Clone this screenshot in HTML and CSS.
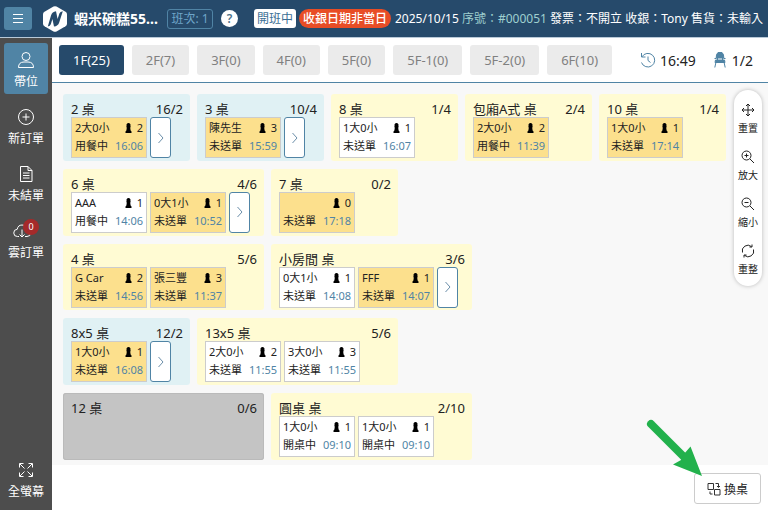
FILE: index.html
```html
<!DOCTYPE html>
<html lang="zh-Hant">
<head>
<meta charset="utf-8">
<title>帶位</title>
<link rel="stylesheet" href="styles.css">
</head>
<body>
<svg class="defs" aria-hidden="true">
  <symbol id="pawn" viewBox="0 0 7 10"><path d="M3.500 0a2 2 0 0 1 1.800 2.900L5.800 4 5.200 4.500 5.600 7.500 6.500 8.500V10H.5V8.500L1.400 7.500 1.800 4.500 1.200 4 1.700 2.900A2 2 0 0 1 3.500 0z"/></symbol>
  <symbol id="next" viewBox="0 0 8 14"><path d="M1.500 2l4.500 5-4.500 5"/></symbol>
</svg>
<header class="topbar">
  <button class="menu" aria-label="選單"><svg width="12" height="12" viewBox="0 0 12 12"><path d="M1 1.500h10M1 5.500h10M1 9.500h10"/></svg></button>
  <svg class="logo" viewBox="0 0 24 26"><path fill="#fff" d="M10.500.6q1.500-.8 3 0l9 5.100q1.500.9 1.500 2.500v9.600q0 1.600-1.500 2.500l-9 5.100q-1.500.8-3 0l-9-5.100Q0 19.400 0 17.800V8.200q0-1.600 1.500-2.500z"/><path fill="#264a6b" d="M4.800 20.500L8 9.500Q9.200 5.500 13 5.200L14.600 13 16.400 7.500Q17 5.500 19.800 5.200L16.200 16.500Q15 20.200 11 20.600L9.400 13 7.800 18.300Q7.200 20.300 4.800 20.500z"/></svg>
  <h1>蝦米碗糕55...</h1>
  <span class="shift">班次: 1</span>
  <button class="help" aria-label="說明">?</button>
  <span class="open">開班中</span>
  <span class="warn">收銀日期非當日</span>
  <p class="info">2025/10/15 <span>序號：#000051</span> 發票：不開立 收銀：Tony 售貨：未輸入</p>
</header>
<div class="body">
  <nav class="side">
    <a href="#" class="on"><svg width="18" height="18" viewBox="0 0 18 18"><circle cx="9" cy="5.500" r="4"/><path d="M1.500 16.500q0-5.500 5.500-5.500h4q5.500 0 5.500 5.500z"/></svg>帶位</a>
    <a href="#"><svg width="18" height="18" viewBox="0 0 18 18"><circle cx="9" cy="9" r="7.500"/><path d="M9 5.500v7M5.500 9h7"/></svg>新訂單</a>
    <a href="#"><svg width="18" height="18" viewBox="0 0 18 18"><path d="M3.500 1.500h7.500l4 4v11H3.500zM11 1.500v4h4M6 8h6.500M6 10.500h6.500M6 13h6.500"/></svg>未結單</a>
    <a href="#" class="cloud"><svg width="18" height="18" viewBox="0 0 18 18"><path d="M6 14.500H4.500a3.600 3.600 0 0 1-.3-7.200Q5 3 9 3t5 4.300a3.600 3.600 0 0 1 0 7.200H12M9 7.500V15M6.500 12.500L9 15l2.500-2.500"/></svg><b>0</b>雲訂單</a>
    <a href="#" class="full"><svg width="18" height="18" viewBox="0 0 18 18"><path d="M7.500 7.500L3 3M2.500 6.500v-4h4M10.500 7.500L15 3M11.500 2.500h4v4M7.500 10.500L3 15M2.500 11.500v4h4M10.500 10.500L15 15M11.500 15.500h4v-4"/></svg>全螢幕</a>
  </nav>
  <main>
    <div class="tabs">
      <button class="on">1F(25)</button><button>2F(7)</button><button>3F(0)</button><button>4F(0)</button><button>5F(0)</button><button>5F-1(0)</button><button>5F-2(0)</button><button>6F(10)</button>
      <div class="stat clock"><svg width="16" height="16" viewBox="0 0 16 16"><path d="M2 4.800A6.800 6.800 0 1 1 1.500 10.500M1.500 1v4h4M8 4.500V8.500l2.500 2"/></svg>16:49</div>
      <div class="stat seat"><svg width="12" height="16" viewBox="0 0 12 16"><path class="fill" d="M4 .5h4Q10 2 9.800 6H2.200Q2 2 4 .5zM1.500 8h9l.5 2.500H1z"/><path d="M2 10L.8 15.500M10 10l1.200 5.500M.5 6.500h2M9.500 6.500h2M3.500 6v2M8.500 6v2"/></svg>1/2</div>
    </div>
    <div class="floor">
      <div class="rows">
        <div class="row">
          <section class="card blue"><h2>2 桌 <span>16/2</span></h2><div class="list">
            <button class="t gold"><span>2大0小</span><i><svg><use href="#pawn"/></svg>2</i><span>用餐中</span><em>16:06</em></button>
            <button class="more" aria-label="更多"><svg><use href="#next"/></svg></button></div></section>
          <section class="card blue"><h2>3 桌 <span>10/4</span></h2><div class="list">
            <button class="t gold"><span>陳先生</span><i><svg><use href="#pawn"/></svg>3</i><span>未送單</span><em>15:59</em></button>
            <button class="more" aria-label="更多"><svg><use href="#next"/></svg></button></div></section>
          <section class="card"><h2>8 桌 <span>1/4</span></h2><div class="list">
            <button class="t"><span>1大0小</span><i><svg><use href="#pawn"/></svg>1</i><span>未送單</span><em>16:07</em></button></div></section>
          <section class="card"><h2>包廂A式 桌 <span>2/4</span></h2><div class="list">
            <button class="t gold"><span>2大0小</span><i><svg><use href="#pawn"/></svg>2</i><span>用餐中</span><em>11:39</em></button></div></section>
          <section class="card"><h2>10 桌 <span>1/4</span></h2><div class="list">
            <button class="t gold"><span>1大0小</span><i><svg><use href="#pawn"/></svg>1</i><span>未送單</span><em>17:14</em></button></div></section>
        </div>
        <div class="row">
          <section class="card wide"><h2>6 桌 <span>4/6</span></h2><div class="list">
            <button class="t"><span>AAA</span><i><svg><use href="#pawn"/></svg>1</i><span>用餐中</span><em>14:06</em></button>
            <button class="t gold"><span>0大1小</span><i><svg><use href="#pawn"/></svg>1</i><span>未送單</span><em>10:52</em></button>
            <button class="more" aria-label="更多"><svg><use href="#next"/></svg></button></div></section>
          <section class="card"><h2>7 桌 <span>0/2</span></h2><div class="list">
            <button class="t gold"><span></span><i><svg><use href="#pawn"/></svg>0</i><span>未送單</span><em>17:18</em></button></div></section>
        </div>
        <div class="row">
          <section class="card wide"><h2>4 桌 <span>5/6</span></h2><div class="list">
            <button class="t gold"><span>G Car</span><i><svg><use href="#pawn"/></svg>2</i><span>未送單</span><em>14:56</em></button>
            <button class="t gold"><span>張三豐</span><i><svg><use href="#pawn"/></svg>3</i><span>未送單</span><em>11:37</em></button></div></section>
          <section class="card wide"><h2>小房間 桌 <span>3/6</span></h2><div class="list">
            <button class="t"><span>0大1小</span><i><svg><use href="#pawn"/></svg>1</i><span>未送單</span><em>14:08</em></button>
            <button class="t gold"><span>FFF</span><i><svg><use href="#pawn"/></svg>1</i><span>未送單</span><em>14:07</em></button>
            <button class="more" aria-label="更多"><svg><use href="#next"/></svg></button></div></section>
        </div>
        <div class="row">
          <section class="card blue"><h2>8x5 桌 <span>12/2</span></h2><div class="list">
            <button class="t gold"><span>1大0小</span><i><svg><use href="#pawn"/></svg>1</i><span>未送單</span><em>16:08</em></button>
            <button class="more" aria-label="更多"><svg><use href="#next"/></svg></button></div></section>
          <section class="card wide"><h2>13x5 桌 <span>5/6</span></h2><div class="list">
            <button class="t"><span>2大0小</span><i><svg><use href="#pawn"/></svg>2</i><span>未送單</span><em>11:55</em></button>
            <button class="t"><span>3大0小</span><i><svg><use href="#pawn"/></svg>3</i><span>未送單</span><em>11:55</em></button></div></section>
        </div>
        <div class="row">
          <section class="card wide gray"><h2>12 桌 <span>0/6</span></h2></section>
          <section class="card wide"><h2>圓桌 桌 <span>2/10</span></h2><div class="list">
            <button class="t"><span>1大0小</span><i><svg><use href="#pawn"/></svg>1</i><span>開桌中</span><em>09:10</em></button>
            <button class="t"><span>1大0小</span><i><svg><use href="#pawn"/></svg>1</i><span>開桌中</span><em>09:10</em></button></div></section>
        </div>
      </div>
      <div class="tools">
        <button><svg viewBox="0 0 14 14"><path d="M7 1v12M1 7h12M5 3l2-2 2 2M5 11l2 2 2-2M3 5L1 7l2 2M11 5l2 2-2 2"/></svg>重置</button>
        <button><svg viewBox="0 0 14 14"><circle cx="5.500" cy="5.500" r="4.500"/><path d="M9 9l4 4M3.500 5.500h4M5.500 3.500v4"/></svg>放大</button>
        <button><svg viewBox="0 0 14 14"><circle cx="5.500" cy="5.500" r="4.500"/><path d="M9 9l4 4M3.500 5.500h4"/></svg>縮小</button>
        <button><svg viewBox="0 0 14 14"><path d="M1.500 8.500A5.600 5.600 0 0 1 10.500 2.600M12.500 5.500A5.600 5.600 0 0 1 3.500 11.400M11 .5v2.500H8.500M3 13.500V11h2.500"/></svg>重整</button>
      </div>
    </div>
    <footer>
      <button class="swap"><svg width="14" height="14" viewBox="0 0 14 14"><path d="M1 1.500h5.500v6H1zM7.500 7.500h5.500v5.500H7.500zM8.500 1.500h3v3.500M10 4l1.500 1.500L13 4M3 9.500v2.500h2.500"/></svg>換桌</button>
      <svg class="arrow" viewBox="0 0 58 58"><path d="M5 5L39 39" stroke="#22b14c" stroke-width="8" stroke-linecap="round"/><path d="M56 57L44.500 27.500 38 35 35 41 27 45.500z" fill="#22b14c"/></svg>
    </footer>
  </main>
</div>
</body>
</html>
```
FILE: styles.css
```css
* { box-sizing: border-box; }
body {
  margin: 0;
  height: 100vh;
  display: flex;
  flex-direction: column;
  font-family: "Noto Sans", "Noto Sans CJK TC", sans-serif;
  color: #222;
  background: #fff;
}
button { font: inherit; color: inherit; border: 0; padding: 0; margin: 0; background: none; }
h1, h2, p { margin: 0; }
svg { display: block; fill: none; stroke-width: 1; flex: none; }
.defs { position: absolute; width: 0; height: 0; }

.topbar {
  flex: none;
  height: 38px;
  display: flex;
  align-items: center;
  padding-left: 4px;
  background: #264a6b;
  border-bottom: 1px solid #b9c9d8;
  color: #fff;
  white-space: nowrap;
  overflow: hidden;
}
.menu {
  width: 28px;
  height: 23px;
  display: grid;
  place-items: center;
  border-radius: 3px;
  background: #5084a5;
}
.menu svg { stroke: #fff; }
.logo { width: 24px; height: 26px; margin: 0 7px 0 11px; }
h1 { width: 86px; font-size: 14px; line-height: 20px; font-weight: 700; }
.shift {
  margin-left: 7px;
  width: 46px;
  text-align: center;
  border: 1px solid #5084a5;
  border-radius: 3px;
  font-size: 12px;
  line-height: 18px;
  color: #6fa5c9;
}
.help {
  width: 17px;
  height: 17px;
  margin: 0 16px 0 8px;
  border-radius: 50%;
  background: #fff;
  color: #4d7288;
  font-size: 12px;
  line-height: 17px;
  font-weight: 600;
}
.open {
  width: 42px;
  text-align: center;
  border-radius: 3px;
  background: #fff;
  color: #3b6f95;
  font-size: 12px;
  line-height: 19px;
}
.warn {
  margin: 0 4px 0 3px;
  width: 92px;
  text-align: center;
  border-radius: 10px;
  background: #e84d26;
  font-size: 12px;
  line-height: 19px;
  font-weight: 500;
}
.info { font-size: 12px; line-height: 20px; }
.info span { color: #9fd0cf; }

.body { flex: 1; min-height: 0; display: flex; }
.side {
  flex: none;
  width: 52px;
  display: flex;
  flex-direction: column;
  gap: 6px;
  padding: 5px 4px 6px;
  background: #4d4d4d;
}
.side a {
  height: 51px;
  display: flex;
  flex-direction: column;
  align-items: center;
  gap: 4px;
  padding-top: 8px;
  border-radius: 3px;
  font-size: 12px;
  line-height: 18px;
  color: #fff;
  text-decoration: none;
  white-space: nowrap;
}
.side svg { stroke: #fff; }
.side .on { background: #5084a5; }
.cloud { position: relative; }
.side .cloud svg { margin-right: 8px; }
.cloud b {
  position: absolute;
  top: 5px;
  left: 19px;
  width: 16px;
  height: 16px;
  border-radius: 50%;
  background: #a52a2a;
  font-size: 9px;
  line-height: 16px;
  font-weight: 400;
  text-align: center;
}
.side .full { margin-top: auto; }

main { flex: 1; min-width: 0; display: flex; flex-direction: column; }
.tabs {
  flex: none;
  height: 45px;
  display: flex;
  align-items: center;
  gap: 8px;
  padding: 0 15px 0 7px;
  border-bottom: 1px solid #5084a5;
  font-size: 13px;
}
.tabs button {
  height: 30px;
  padding: 0 10px;
  flex: 1 1 auto;
  border-radius: 3px;
  background: #ebebeb;
  color: #808080;
  white-space: nowrap;
}
.tabs .on { background: #264a6b; color: #fff; }
.stat { display: flex; align-items: center; gap: 4px; font-size: 14px; }
.clock { margin-left: 20px; }
.seat { margin-left: 10px; gap: 6px; }
.stat svg { stroke: #5084a5; }
.stat .fill { fill: #5084a5; }

.floor {
  flex: 1;
  min-height: 0;
  display: flex;
  align-items: flex-start;
  gap: 8px;
  padding: 7px 7px 5px 11px;
  background: #f8f8f8;
}
.rows {
  flex: 1;
  align-self: stretch;
  display: grid;
  grid-template-rows: repeat(5, 1fr);
  gap: 8px;
  padding-top: 4px;
}
.row { display: flex; gap: 7px; min-height: 0; }
.card {
  flex: none;
  width: 127px;
  padding: 7px 7px 0 8px;
  border-radius: 3px;
  background: #fffbd3;
}
.wide { width: 201px; }
.blue { background: #e0f1f4; }
.gray { background: #c4c4c4; box-shadow: inset 0 0 0 1px #bababa; }
h2 {
  display: flex;
  justify-content: space-between;
  font-size: 13px;
  line-height: 16px;
  font-weight: 400;
  white-space: nowrap;
}
.list { display: flex; gap: 3px; }
.t {
  flex: none;
  width: 76px;
  height: 41px;
  display: grid;
  grid-template-columns: auto auto;
  grid-template-rows: 18px 18px;
  justify-content: space-between;
  align-items: center;
  padding: 1px 3px;
  border: 1px solid #ccc;
  background: #fff;
  font-size: 11px;
  line-height: 18px;
  text-align: left;
  white-space: nowrap;
}
.gold { background: #fce08d; }
.t i, .t em { font-style: normal; justify-self: end; }
.t i { display: flex; align-items: center; gap: 5px; }
.t i svg { width: 7px; height: 10px; fill: #000; }
.t em { color: #5084a5; }
.more {
  width: 21px;
  height: 41px;
  display: grid;
  place-items: center;
  border: 1px solid #5084a5;
  border-radius: 3px;
  background: #fff;
}
.more svg { width: 8px; height: 14px; stroke: #6c8faa; }

.tools {
  flex: none;
  width: 28px;
  display: flex;
  flex-direction: column;
  gap: 14px;
  padding: 13px 0 9px;
  border-radius: 14px;
  background: #fff;
  box-shadow: 0 0 4px rgba(0, 0, 0, .25);
}
.tools button {
  display: flex;
  flex-direction: column;
  align-items: center;
  gap: 3px;
  font-size: 10px;
  line-height: 16px;
}
.tools svg { width: 14px; height: 14px; stroke: #222; }

footer {
  position: relative;
  flex: none;
  height: 45px;
  display: flex;
  justify-content: flex-end;
  align-items: flex-start;
  padding: 8px 7px 0;
}
.swap {
  width: 67px;
  height: 31px;
  display: flex;
  align-items: center;
  justify-content: center;
  gap: 3px;
  border: 1px solid #ccc;
  border-radius: 3px;
  background: #fff;
  font-size: 12px;
}
.swap svg { stroke: #333; }
.arrow { position: absolute; right: 64px; bottom: 33px; width: 58px; height: 58px; }
```
